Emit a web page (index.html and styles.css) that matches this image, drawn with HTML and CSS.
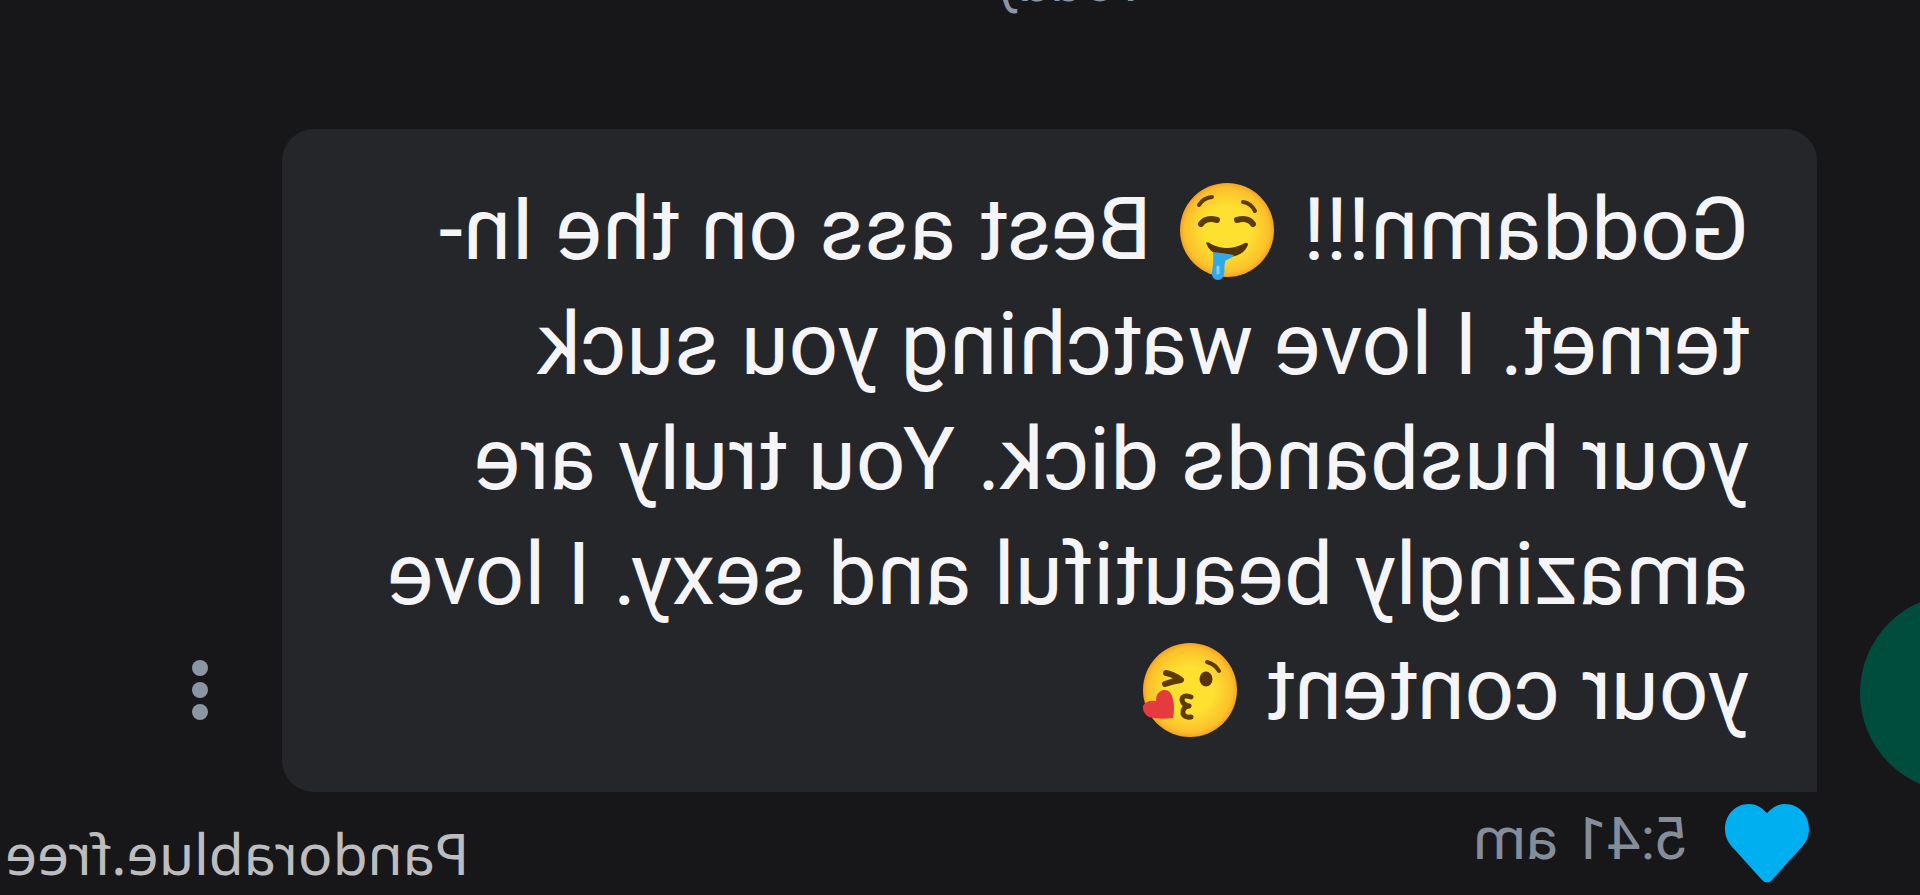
FILE: index.html
```html
<!DOCTYPE html>
<html lang="en">
<head>
<meta charset="utf-8">
<meta name="viewport" content="width=device-width, initial-scale=1">
<title>Chat</title>
<link rel="stylesheet" href="styles.css">
</head>
<body>
<main class="chat">
  <p class="date">Today</p>
  <article class="message">
    <span class="avatar"></span>
    <p class="bubble">Goddamn!!! <svg class="emoji" viewBox="0 0 94 94" role="img" aria-label="Drooling face">
        <defs>
          <radialGradient id="skin" cx="50%" cy="50%" r="50%">
            <stop offset="0.5" stop-color="#fde030"/>
            <stop offset="0.9" stop-color="#fbc02b"/>
            <stop offset="1" stop-color="#f4a223"/>
          </radialGradient>
        </defs>
        <g transform="translate(94 0) scale(-1 1)">
          <circle cx="47" cy="47" r="47" fill="url(#skin)"/>
          <g fill="none" stroke="#5c3c05" stroke-linecap="round">
            <path stroke-width="4" d="M19 22Q23 15 32 14M63 19Q71 20 75 28"/>
            <path stroke-width="6" d="M21 41Q26 34 37 37M57 37Q68 34 73 41"/>
          </g>
          <path fill="#543205" d="M26 60Q28 58 31 61Q47 69 63 61Q68 58 68 62Q63 74 47 74Q31 73 26 60Z"/>
          <path fill="#31a9e8" d="M33 69Q43 70 54 72Q51 76 46 77Q44 80 44.500 88Q44 97 38 97Q31 97 32 88Q34 80 33 69Z"/>
          <path fill="none" stroke="#7fd0f6" stroke-width="3" stroke-linecap="round" d="M38 84V90"/>
        </g>
      </svg> Best ass on the In-<br>ternet. I love watching you suck<br>your husbands dick. You truly are<br>amazingly beautiful and sexy. I love<br>your content <svg class="emoji" viewBox="0 0 94 94" role="img" aria-label="Face blowing a kiss">
        <g transform="translate(94 0) scale(-1 1)">
          <circle cx="47" cy="47" r="47" fill="url(#skin)"/>
          <g fill="none" stroke="#5c3c05" stroke-linecap="round" stroke-linejoin="round">
            <path stroke-width="4" d="M64 19Q72 21 76 28"/>
            <path stroke-width="6" d="M23 30Q30 31 38 37Q30 38 22 41"/>
            <path stroke-width="5" d="M48 54Q39 51 39 57Q40 62 46 63Q39 64 40 71Q42 75 48 74"/>
          </g>
          <ellipse cx="63" cy="36" rx="6.500" ry="7.500" fill="#5a3208"/>
          <path fill="#e53b3f" d="M30 75Q32 65 30 56Q28 46 20 47Q13 49 13 58Q3 57 0 63Q-1 70 6 74Q16 77 30 75Z"/>
        </g>
      </svg></p>
    <button class="menu" type="button" aria-label="Message options">
      <span class="dot"></span><span class="dot"></span><span class="dot"></span>
    </button>
  </article>
  <footer class="meta">
    <button class="like" type="button" aria-label="Liked">
      <svg class="heart" viewBox="0 0 84 79" aria-hidden="true">
        <path fill="#00aff0" d="M42 9C36 3 31 0 24 0C10 0 0 11 0 25C0 34 4 40 10 46L37 76Q42 81 47 76L74 46C80 40 84 34 84 25C84 11 74 0 60 0C53 0 48 3 42 9Z"/>
      </svg>
    </button>
    <time class="time" datetime="05:41">5:41 am</time>
  </footer>
  <span class="watermark">Pandorablue.free</span>
</main>
</body>
</html>
```
FILE: styles.css
```css
* {
  box-sizing: border-box;
}

body {
  margin: 0;
  background: #17171a;
  color: #f5f5f8;
  font-family: Roboto, "Liberation Sans", sans-serif;
  overflow: hidden;
}

button {
  margin: 0;
  padding: 0;
  border: 0;
  background: none;
}

/* The conversation is shown as a mirror image. */
.chat {
  position: relative;
  min-height: 100vh;
  overflow: hidden;
  transform: scaleX(-1);
}

.date {
  margin: -53px 220px 113px 0;
  color: #8a96a3;
  font-size: 58px;
  line-height: 69px;
  text-align: center;
}

.message {
  display: flex;
  align-items: flex-end;
  margin-left: -138px;
  padding-right: 192px;
}

.avatar {
  flex: none;
  width: 198px;
  height: 198px;
  margin-right: 43px;
  border-radius: 50%;
  background: #004d3e;
}

.bubble {
  flex: 1;
  margin: 0;
  padding: 43px 0 45px 68px;
  border-radius: 32px 32px 32px 0;
  background: #25262a;
  font-size: 87px;
  line-height: 115px;
  white-space: nowrap;
}

.emoji {
  width: 94px;
  height: 94px;
  margin: 0 7px;
  vertical-align: -18px;
  overflow: visible;
}

.menu {
  display: flex;
  flex: none;
  flex-direction: column;
  gap: 6px;
  margin: 0 0 72px 74px;
}

.dot {
  width: 16px;
  height: 16px;
  border-radius: 50%;
  background: #8a96a3;
}

.meta {
  display: flex;
  align-items: flex-start;
  gap: 36px;
  padding: 12px 0 0 111px;
}

.like {
  width: 84px;
  height: 79px;
}

.heart {
  display: block;
  width: 84px;
  height: 79px;
}

.time {
  color: #858d9a;
  font-size: 60px;
  line-height: 70px;
}

.watermark {
  position: absolute;
  right: 5px;
  bottom: 8px;
  color: #bdbdbf;
  font-family: "Noto Sans", "Open Sans", sans-serif;
  font-size: 57px;
  line-height: 68px;
}
```
